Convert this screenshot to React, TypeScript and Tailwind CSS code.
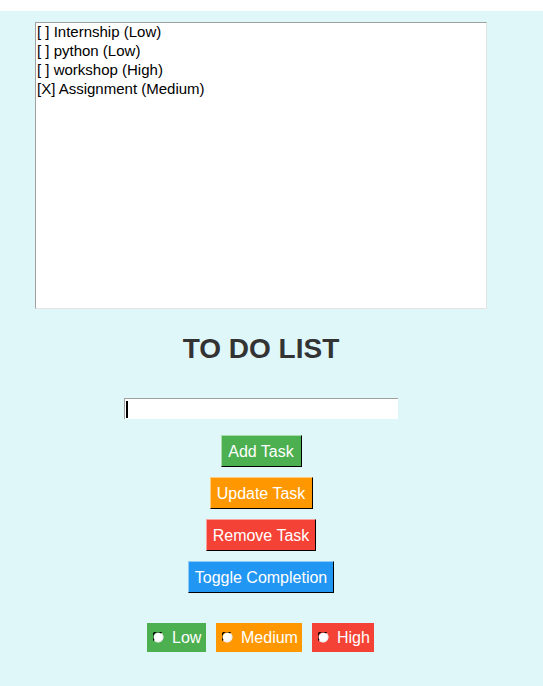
import React from "react";

const font = { fontFamily: '"Liberation Sans", Arial, sans-serif' };

function Btn({ label, w, bg, light }: { label: string; w: string; bg: string; light: string }) {
  return (
    <div
      className={`${w} ${bg} ${light} h-[32px] pt-[2px] flex items-center justify-center text-white text-[16px] leading-none border border-r-black border-b-black`}
    >
      {label}
    </div>
  );
}

function Radio({ label, w, bg }: { label: string; w: string; bg: string }) {
  return (
    <div className={`${w} ${bg} h-[29px] flex items-center pl-[6px] text-white text-[16px] leading-none`}>
      <svg width="11" height="11" viewBox="0 0 11 11" className="mr-[8px] shrink-0">
        <circle cx="5.5" cy="5.5" r="4.8" fill="#ffffff" />
        <path d="M1.1 8.5 A4.8 4.8 0 0 1 8.5 1.1" stroke="#000" strokeWidth="1.4" fill="none" />
        <path d="M8.5 1.1 A4.8 4.8 0 0 1 1.1 8.5" stroke="#e8e8e8" strokeWidth="1" fill="none" />
      </svg>
      <span>{label}</span>
    </div>
  );
}

export default function App() {
  const tasks = ["[ ] Internship (Low)", "[ ] python (Low)", "[ ] workshop (High)", "[X] Assignment (Medium)"];
  return (
    <div className="w-[543px] bg-white pt-[11px]" style={font}>
      <div className="bg-[#e0f7fa] h-[675px] w-full">
        <div className="w-[522px] flex flex-col items-center pt-[11px]">
          <div className="w-[452px] h-[287px] bg-white border border-t-[#a0a0a0] border-l-[#a0a0a0] border-r-[#e3e3e3] border-b-[#e3e3e3] pl-[1px] text-black text-[15px] leading-[19px] overflow-hidden">
            <div className="-mt-[1px]">
              {tasks.map((t) => (
                <div key={t} className="whitespace-pre">{t}</div>
              ))}
            </div>
          </div>
          <div className="mt-[24px] h-[32px] text-[28px] leading-[32px] font-bold text-[#333333]">TO DO LIST</div>
          <div className="mt-[33px] w-[274px] h-[21px] bg-white border-t border-l border-[#a0a0a0] flex items-center">
            <div className="w-[2px] h-[17px] bg-black ml-[1px]" />
          </div>
          <div className="mt-[16px] flex flex-col items-center gap-[10px]">
            <Btn label="Add Task" w="w-[81px]" bg="bg-[#4caf50]" light="border-t-[#a8dca9] border-l-[#a8dca9]" />
            <Btn label="Update Task" w="w-[103px]" bg="bg-[#ff9800]" light="border-t-[#ffcc80] border-l-[#ffcc80]" />
            <Btn label="Remove Task" w="w-[110px]" bg="bg-[#f44336]" light="border-t-[#f9a19b] border-l-[#f9a19b]" />
            <Btn label="Toggle Completion" w="w-[146px]" bg="bg-[#2196f3]" light="border-t-[#90cbf9] border-l-[#90cbf9]" />
          </div>
          <div className="mt-[30px] flex gap-[10px] pr-[1px]">
            <Radio label="Low" w="w-[59px]" bg="bg-[#4caf50]" />
            <Radio label="Medium" w="w-[86px]" bg="bg-[#ff9800]" />
            <Radio label="High" w="w-[62px]" bg="bg-[#f44336]" />
          </div>
        </div>
      </div>
    </div>
  );
}
